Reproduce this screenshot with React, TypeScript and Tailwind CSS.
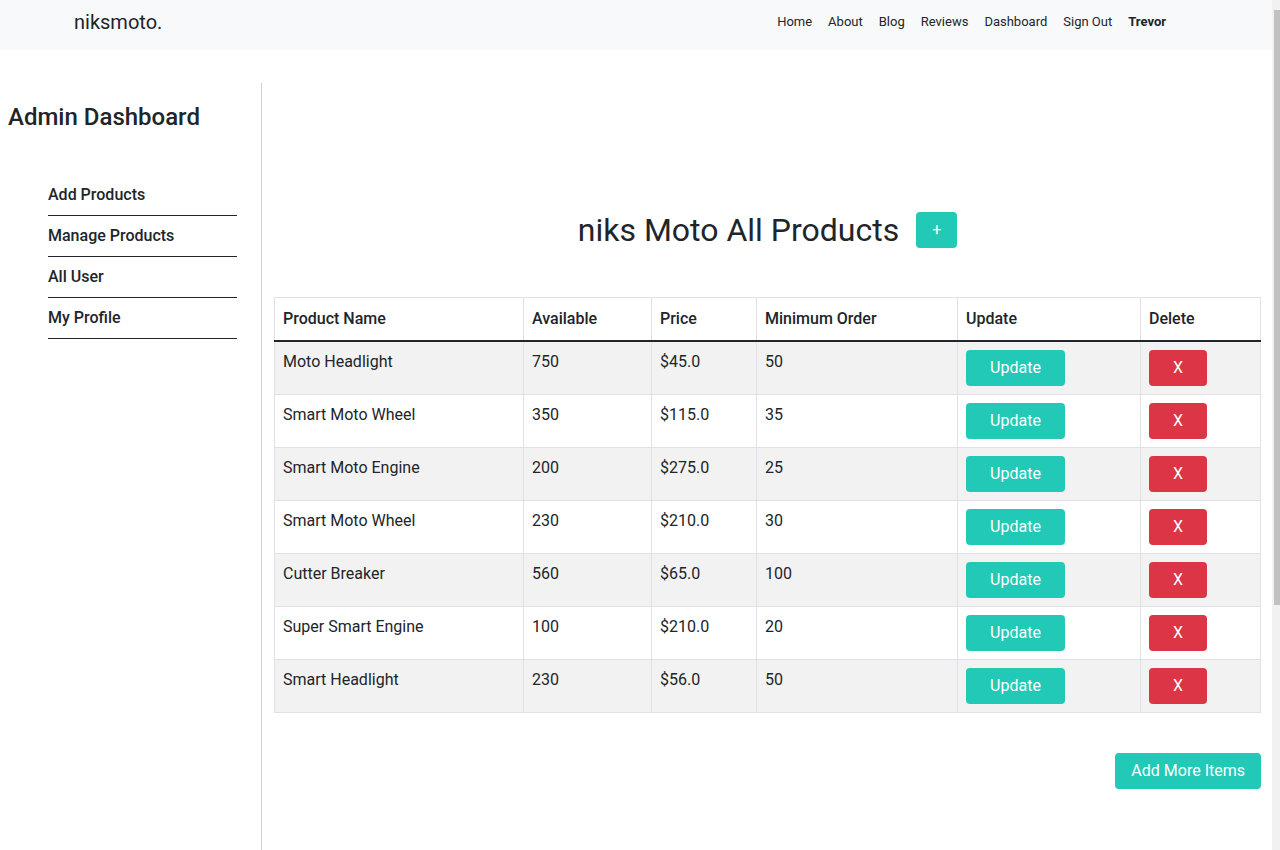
const navLinks = ["Home", "About", "Blog", "Reviews", "Dashboard", "Sign Out"];

const sideLinks = ["Add Products", "Manage Products", "All User", "My Profile"];

const products = [
  { name: "Moto Headlight", available: 750, price: "$45.0", min: 50 },
  { name: "Smart Moto Wheel", available: 350, price: "$115.0", min: 35 },
  { name: "Smart Moto Engine", available: 200, price: "$275.0", min: 25 },
  { name: "Smart Moto Wheel", available: 230, price: "$210.0", min: 30 },
  { name: "Cutter Breaker", available: 560, price: "$65.0", min: 100 },
  { name: "Super Smart Engine", available: 100, price: "$210.0", min: 20 },
  { name: "Smart Headlight", available: 230, price: "$56.0", min: 50 },
];

const thCls = "border border-[#dee2e6] border-b-2 border-b-[#212529] px-2 py-[9px] text-left align-bottom font-medium leading-6";
const tdCls = "border border-[#dee2e6] px-2 py-2 align-top leading-6";

export default function App() {
  return (
    <div
      className="flex h-screen overflow-hidden bg-white text-[#212529]"
      style={{ fontFamily: "Roboto, 'Noto Sans', sans-serif" }}
    >
      <div className="min-w-0 flex-1">
        {/* Navbar */}
        <nav className="flex h-[50px] items-start justify-between bg-[#f8f9fa]">
          <a className="ml-[74px] mt-[12px] text-[20px] leading-none text-[#212529]">niksmoto.</a>
          <ul className="mr-[98px] mt-[15px] flex items-center text-[13px] leading-none">
            {navLinks.map((l) => (
              <li key={l} className="px-2 text-[#212529]">
                {l}
              </li>
            ))}
            <li className="px-2 font-bold text-[#212529]">Trevor</li>
          </ul>
        </nav>

        <div className="mt-[33px] flex min-h-[1103px]">
          {/* Sidebar */}
          <aside className="w-[262px] shrink-0 border-r border-[#d0d0d0] pt-[20px]">
            <h3 className="pl-2 text-[24px] font-medium leading-[1.2]">Admin Dashboard</h3>
            <ul className="mt-[43px] ml-[48px] mr-[24px]">
              {sideLinks.map((l) => (
                <li key={l} className="border-b border-[#212529] py-2 text-[16px] font-medium leading-6">
                  {l}
                </li>
              ))}
            </ul>
          </aside>

          {/* Main */}
          <main className="flex-1 px-3 pt-[128px]">
            <div className="flex items-center justify-center gap-[17px]">
              <h2 className="text-[32px] leading-[1.2]">niks Moto All Products</h2>
              <button className="h-9 w-[41px] rounded bg-[#22c9b7] text-[16px] leading-none text-white">+</button>
            </div>

            <table className="mt-[48px] w-full table-fixed border-collapse text-[16px]">
              <colgroup>
                <col className="w-[249px]" />
                <col className="w-[128px]" />
                <col className="w-[105px]" />
                <col className="w-[201px]" />
                <col className="w-[183px]" />
                <col className="w-[120px]" />
              </colgroup>
              <thead>
                <tr>
                  <th className={thCls}>Product Name</th>
                  <th className={thCls}>Available</th>
                  <th className={thCls}>Price</th>
                  <th className={thCls}>Minimum Order</th>
                  <th className={thCls}>Update</th>
                  <th className={thCls}>Delete</th>
                </tr>
              </thead>
              <tbody>
                {products.map((p, i) => (
                  <tr key={i} className={i % 2 === 0 ? "bg-[#f2f2f2]" : "bg-white"}>
                    <td className={tdCls}>{p.name}</td>
                    <td className={tdCls}>{p.available}</td>
                    <td className={tdCls}>{p.price}</td>
                    <td className={tdCls}>{p.min}</td>
                    <td className={tdCls}>
                      <button className="h-9 w-[99px] rounded bg-[#22c9b7] text-[16px] text-white">Update</button>
                    </td>
                    <td className={tdCls}>
                      <button className="h-9 w-[58px] rounded bg-[#dc3545] text-[16px] text-white">X</button>
                    </td>
                  </tr>
                ))}
              </tbody>
            </table>

            <div className="mt-10 flex justify-end">
              <button className="h-9 rounded bg-[#22c9b7] px-4 text-[16px] text-white">Add More Items</button>
            </div>
          </main>
        </div>
      </div>

      {/* Browser scrollbar */}
      <div className="flex w-2 shrink-0 flex-col bg-[#f1f1f1] py-[10px]">
        <div className="h-[595px] w-[6px] self-end bg-[#c1c1c1]" />
      </div>
    </div>
  );
}
